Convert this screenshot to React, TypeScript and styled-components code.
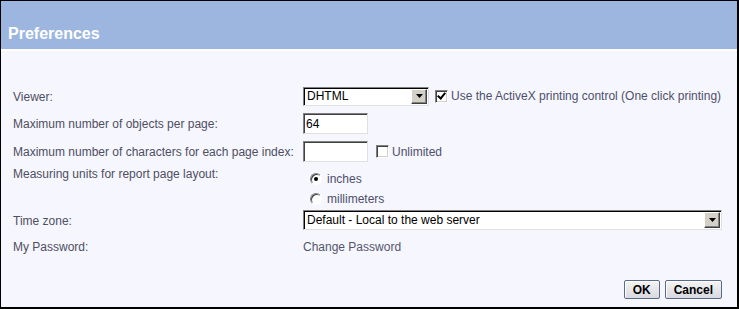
import * as React from 'react';
import styled, { createGlobalStyle } from 'styled-components';

// ------------------------------------
// Global
// ------------------------------------

const GlobalStyle = createGlobalStyle`
  html, body {
    margin: 0;
    padding: 0;
    background: #ffffff;
  }
  * {
    box-sizing: border-box;
  }
`;

// ------------------------------------
// Component
// ------------------------------------

const App = () => (
  <>
    <GlobalStyle />
    <StyledFrame>
      <StyledHeader>Preferences</StyledHeader>
      <StyledBody>
        <StyledForm>
          <StyledLabel>Viewer:</StyledLabel>
          <StyledCell>
            <Select width={126} height={19} value="DHTML" />
            <StyledCheck checked $gap={6} />
            <StyledText>Use the ActiveX printing control (One click printing)</StyledText>
          </StyledCell>

          <StyledLabel>Maximum number of objects per page:</StyledLabel>
          <StyledCell>
            <StyledInput>64</StyledInput>
          </StyledCell>

          <StyledLabel>Maximum number of characters for each page index:</StyledLabel>
          <StyledCell>
            <StyledInput />
            <StyledCheck $gap={8} />
            <StyledText>Unlimited</StyledText>
          </StyledCell>

          <StyledLabel $top={-6}>Measuring units for report page layout:</StyledLabel>
          <StyledRadios>
            <StyledRadioRow>
              <StyledRadio checked />
              <StyledText>inches</StyledText>
            </StyledRadioRow>
            <StyledRadioRow>
              <StyledRadio />
              <StyledText>millimeters</StyledText>
            </StyledRadioRow>
          </StyledRadios>

          <StyledLabel>Time zone:</StyledLabel>
          <StyledCell>
            <Select width={419} height={20} value="Default - Local to the web server" />
          </StyledCell>

          <StyledLabel $top={-1}>My Password:</StyledLabel>
          <StyledCell>
            <StyledLink>Change Password</StyledLink>
          </StyledCell>
        </StyledForm>

        <StyledFooter>
          <StyledButton>OK</StyledButton>
          <StyledButton>Cancel</StyledButton>
        </StyledFooter>
      </StyledBody>
    </StyledFrame>
  </>
);

export default App;

// ------------------------------------
// Select
// ------------------------------------

type SelectProps = {
  width: number;
  height: number;
  value: string;
};
const Select = (props: SelectProps) => (
  <StyledSelect style={{ width: props.width, height: props.height }}>
    <StyledSelectValue>{props.value}</StyledSelectValue>
    <StyledArrow>
      <svg width="7" height="4" viewBox="0 0 7 4">
        <path d="M0 0h7L3.5 4z" fill="#000" />
      </svg>
    </StyledArrow>
  </StyledSelect>
);

// ------------------------------------
// Styles
// ------------------------------------

const StyledFrame = styled.div`
  width: 739px;
  height: 309px;
  border: 1px solid #000;
  border-right-width: 2px;
  border-bottom-width: 2px;
  display: flex;
  flex-direction: column;
  background: #f5f6fe;
  font-family: 'Liberation Sans', Arial, sans-serif;
  font-size: 12px;
  line-height: 14px;
  -webkit-font-smoothing: none;
`;

const StyledHeader = styled.div`
  height: 50px;
  background: #9cb6df;
  border-bottom: 2px solid #ffffff;
  color: #ffffff;
  font-weight: bold;
  font-size: 16px;
  line-height: 18px;
  padding: 24px 0 0 7px;
`;

const StyledBody = styled.div`
  flex: 1;
  display: flex;
  flex-direction: column;
  padding: 35px 15px 0 12px;
`;

const StyledForm = styled.div`
  display: grid;
  grid-template-columns: 290px 1fr;
  row-gap: 7px;
  align-items: start;
`;

const StyledLabel = styled.div<{ $top?: number }>`
  color: #4f4f5f;
  margin-top: ${(p) => 4 + (p.$top ?? 0)}px;
  white-space: nowrap;
`;

const StyledCell = styled.div`
  display: flex;
  align-items: center;
  min-height: 20px;
`;

const StyledText = styled.span`
  color: #4f4f6a;
  white-space: nowrap;
`;

const StyledLink = styled.span`
  color: #55556a;
`;

const StyledSelect = styled.div`
  display: flex;
  align-items: center;
  background: #ffffff;
  border: 1px solid;
  border-color: #808080 #e0e0e0 #e0e0e0 #808080;
  box-shadow: inset 1px 1px 0 #000;
  padding: 1px 1px 1px 2px;
`;

const StyledSelectValue = styled.span`
  flex: 1;
  color: #000;
  padding-left: 1px;
`;

const StyledArrow = styled.span`
  width: 16px;
  align-self: stretch;
  background: #d4d0c8;
  display: flex;
  align-items: center;
  justify-content: center;
  border: 1px solid;
  border-color: #ffffff #404040 #404040 #ffffff;
  box-shadow: inset -1px -1px 0 #808080;
`;

const StyledInput = styled.div`
  width: 65px;
  height: 21px;
  background: #ffffff;
  border: 1px solid;
  border-color: #808080 #e0e0e0 #e0e0e0 #808080;
  box-shadow: inset 1px 1px 0 #404040;
  padding: 3px 2px;
  color: #000;
`;

const StyledCheck = styled.span<{ checked?: boolean; $gap: number }>`
  width: 13px;
  height: 13px;
  margin: 0 3px 0 ${(p) => p.$gap}px;
  background: #ffffff;
  border: 1px solid;
  border-color: #808080 #ffffff #ffffff #808080;
  box-shadow: inset 1px 1px 0 #404040, inset -1px -1px 0 #d4d0c8;
  position: relative;
  &::after {
    content: '';
    display: ${(p) => (p.checked ? 'block' : 'none')};
    position: absolute;
    left: 3px;
    top: 0px;
    width: 3px;
    height: 6px;
    border: solid #000;
    border-width: 0 2px 2px 0;
    transform: rotate(40deg);
  }
`;

const StyledRadios = styled.div`
  display: flex;
  flex-direction: column;
  gap: 6px;
  padding: 3px 0 0 7px;
  margin-bottom: -3px;
`;

const StyledRadioRow = styled.div`
  display: flex;
  align-items: center;
  height: 14px;
`;

const StyledRadio = styled.span<{ checked?: boolean }>`
  width: 12px;
  height: 12px;
  margin-right: 5px;
  border-radius: 50%;
  background: #ffffff;
  border: 1px solid;
  border-color: #808080 #ffffff #ffffff #808080;
  box-shadow: inset 1px 1px 0 #404040;
  position: relative;
  &::after {
    content: '';
    display: ${(p) => (p.checked ? 'block' : 'none')};
    position: absolute;
    left: 3px;
    top: 3px;
    width: 4px;
    height: 4px;
    border-radius: 50%;
    background: #000;
  }
`;

const StyledFooter = styled.div`
  margin-top: auto;
  padding-bottom: 8px;
  display: flex;
  justify-content: flex-end;
  gap: 5px;
`;

const StyledButton = styled.button`
  height: 19px;
  padding: 0 8px;
  min-width: 36px;
  font-family: 'Liberation Sans', Arial, sans-serif;
  font-size: 12px;
  font-weight: bold;
  color: #000;
  background: linear-gradient(#f4f4f4, #d8d8e0);
  border: 1px solid #5a6a8a;
  border-radius: 2px;
  box-shadow: inset 1px 1px 0 #ffffff;
`;
